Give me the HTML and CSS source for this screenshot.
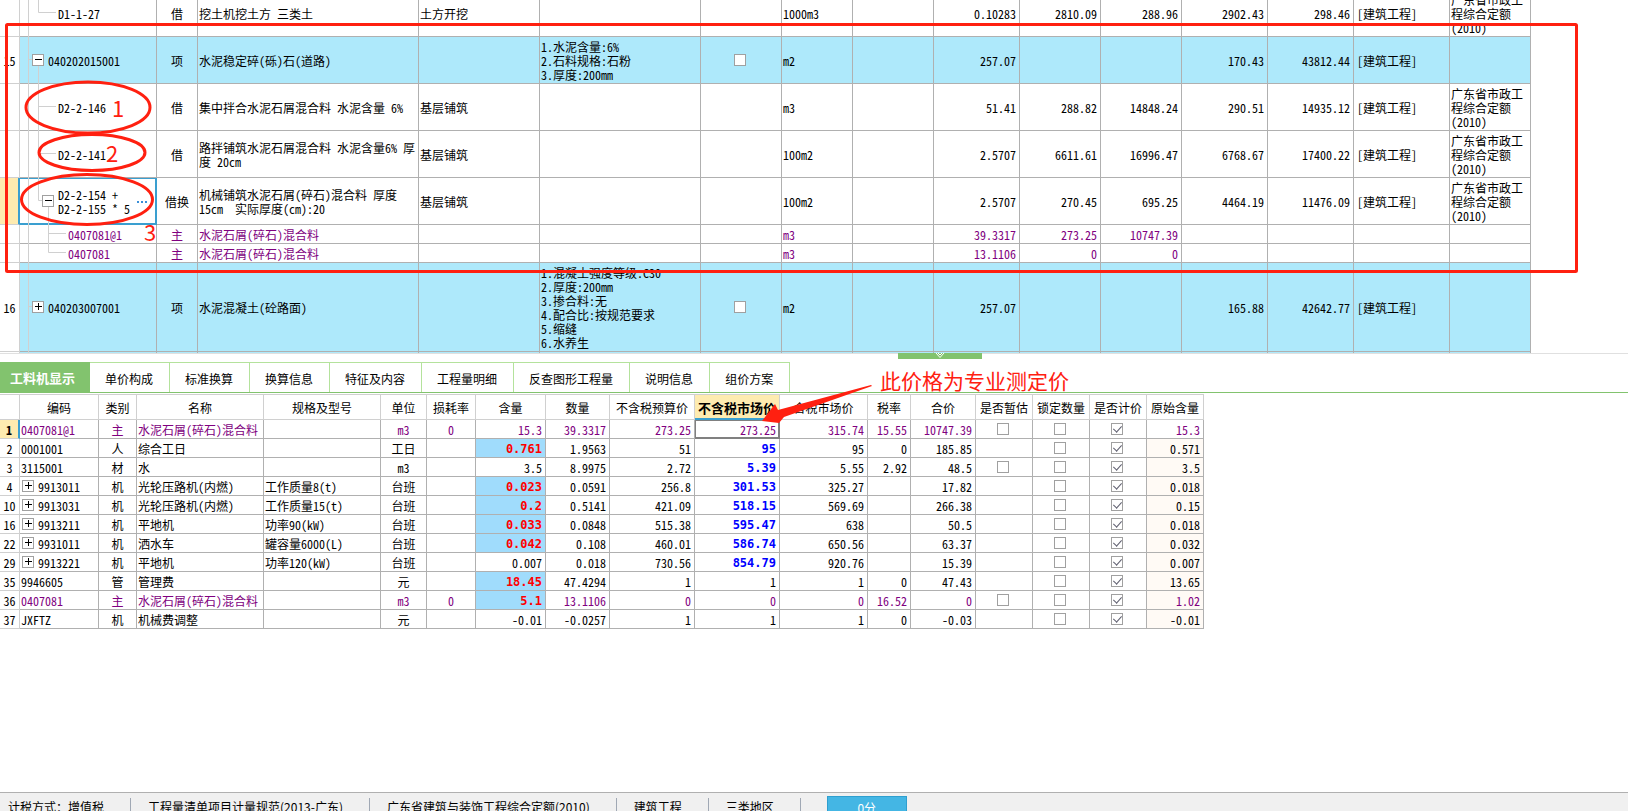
FILE: index.html
```html
<!DOCTYPE html>
<html lang="zh-CN">
<head>
<meta charset="utf-8">
<title>工料机显示</title>
<link rel="stylesheet" href="styles.css">
</head>
<body>
<div class="app">
<section class="budget">
<div class="scrolled">
<table class="grid items">
<colgroup><col class="w20"><col class="w137"><col class="w41"><col class="w221"><col class="w121"><col class="w161"><col class="w81"><col class="w71"><col class="w81"><col class="w86"><col class="w81"><col class="w81"><col class="w86"><col class="w86"><col class="w96"><col class="w81"></colgroup>
<tbody>
<tr class="tall"><th></th><td class="lv2">D1-1-27</td><td class="c">借</td><td>挖土机挖土方 三类土</td><td>土方开挖</td><td></td><td></td><td>1000m3</td><td></td><td class="r">0.10283</td><td class="r">2810.09</td><td class="r">288.96</td><td class="r">2902.43</td><td class="r">298.46</td><td class="major">[建筑工程]</td><td>广东省市政工<br>程综合定额<br>(2010)</td></tr>
<tr class="tall list"><th>15</th><td class="lv1"><div class="node"><button class="toggle minus" aria-label="折叠"></button>040202015001</div></td><td class="c">项</td><td>水泥稳定碎(砾)石(道路)</td><td></td><td>1.水泥含量:6%<br>2.石料规格:石粉<br>3.厚度:200mm</td><td class="k"><input type="checkbox" aria-label="选择 040202015001"></td><td>m2</td><td></td><td class="r">257.07</td><td></td><td></td><td class="r">170.43</td><td class="r">43812.44</td><td class="major">[建筑工程]</td><td></td></tr>
<tr class="tall"><th></th><td class="lv2">D2-2-146</td><td class="c">借</td><td>集中拌合水泥石屑混合料 水泥含量 6%</td><td>基层铺筑</td><td></td><td></td><td>m3</td><td></td><td class="r">51.41</td><td class="r">288.82</td><td class="r">14848.24</td><td class="r">290.51</td><td class="r">14935.12</td><td class="major">[建筑工程]</td><td>广东省市政工<br>程综合定额<br>(2010)</td></tr>
<tr class="tall"><th></th><td class="lv2">D2-2-141</td><td class="c">借</td><td>路拌铺筑水泥石屑混合料 水泥含量6% 厚<br>度 20cm</td><td>基层铺筑</td><td></td><td></td><td>100m2</td><td></td><td class="r">2.5707</td><td class="r">6611.61</td><td class="r">16996.47</td><td class="r">6768.67</td><td class="r">17400.22</td><td class="major">[建筑工程]</td><td>广东省市政工<br>程综合定额<br>(2010)</td></tr>
<tr class="tall"><th class="current"></th><td class="active"><div class="node"><button class="toggle minus" aria-label="折叠"></button><span>D2-2-154 +<br>D2-2-155 * 5</span><button class="more" aria-label="更多"><i></i><i></i><i></i></button></div></td><td class="c">借换</td><td>机械铺筑水泥石屑(碎石)混合料 厚度<br>15cm  实际厚度(cm):20</td><td>基层铺筑</td><td></td><td></td><td>100m2</td><td></td><td class="r">2.5707</td><td class="r">270.45</td><td class="r">695.25</td><td class="r">4464.19</td><td class="r">11476.09</td><td class="major">[建筑工程]</td><td>广东省市政工<br>程综合定额<br>(2010)</td></tr>
<tr class="main"><th></th><td class="lv3">0407081@1</td><td class="c">主</td><td>水泥石屑(碎石)混合料</td><td></td><td></td><td></td><td>m3</td><td></td><td class="r">39.3317</td><td class="r">273.25</td><td class="r">10747.39</td><td></td><td></td><td></td><td></td></tr>
<tr class="main"><th></th><td class="lv3">0407081</td><td class="c">主</td><td>水泥石屑(碎石)混合料</td><td></td><td></td><td></td><td>m3</td><td></td><td class="r">13.1106</td><td class="r">0</td><td class="r">0</td><td></td><td></td><td></td><td></td></tr>
<tr class="taller list"><th>16</th><td class="lv1"><div class="node"><button class="toggle plus" aria-label="展开"></button>040203007001</div></td><td class="c">项</td><td>水泥混凝土(砼路面)</td><td></td><td>1.混凝土强度等级:C30<br>2.厚度:200mm<br>3.掺合料:无<br>4.配合比:按规范要求<br>5.缩缝<br>6.水养生</td><td class="k"><input type="checkbox" aria-label="选择 040203007001"></td><td>m2</td><td></td><td class="r">257.07</td><td></td><td></td><td class="r">165.88</td><td class="r">42642.77</td><td class="major">[建筑工程]</td><td></td></tr>
<tr class="list"><th></th><td></td><td></td><td></td><td></td><td></td><td></td><td></td><td></td><td></td><td></td><td></td><td></td><td></td><td></td><td></td></tr>
</tbody>
</table>
<svg class="tree" width="80" height="363" viewBox="0 -10 80 363" aria-hidden="true">
<path d="M28.5 -10V353M38.5 -10V12.5H56M28.5 59.5H32M38.5 66V200.5H42M38.5 106.5H56M38.5 153.5H56M48.5 207V252.5H66M48.5 233.5H66M28.5 306.5H32"/>
</svg>
</div>
</section>
<div class="splitter"><button class="handle" aria-label="收起"><svg width="10" height="6" viewBox="0 0 10 6"><path d="M1 0L5 4.500L9 0M3 0L5 2L7 0"/></svg></button></div>
<nav class="tabs">
<button class="tab on">工料机显示</button><button class="tab">单价构成</button><button class="tab">标准换算</button><button class="tab">换算信息</button><button class="tab">特征及内容</button><button class="tab">工程量明细</button><button class="tab">反查图形工程量</button><button class="tab">说明信息</button><button class="tab">组价方案</button>
</nav>
<section class="detail">
<table class="grid parts">
<colgroup><col class="w20"><col class="w79"><col class="w38"><col class="w127"><col class="w117"><col class="w46"><col class="w49"><col class="w70"><col class="w64"><col class="w85"><col class="w85"><col class="w88"><col class="w43"><col class="w65"><col class="w57"><col class="w57"><col class="w57"><col class="w57"></colgroup>
<thead>
<tr><th></th><th>编码</th><th>类别</th><th>名称</th><th>规格及型号</th><th>单位</th><th>损耗率</th><th>含量</th><th>数量</th><th>不含税预算价</th><th class="picked">不含税市场价</th><th>含税市场价</th><th>税率</th><th>合价</th><th>是否暂估</th><th>锁定数量</th><th>是否计价</th><th>原始含量</th></tr>
</thead>
<tbody>
<tr class="main"><th class="current edge">1</th><td>0407081@1</td><td class="c">主</td><td>水泥石屑(碎石)混合料</td><td></td><td class="c">m3</td><td class="c">0</td><td class="r">15.3</td><td class="r">39.3317</td><td class="r">273.25</td><td class="r focus">273.25</td><td class="r">315.74</td><td class="r">15.55</td><td class="r">10747.39</td><td class="k"><input type="checkbox" aria-label="是否暂估"></td><td class="k"><input type="checkbox" aria-label="锁定数量"></td><td class="k"><input type="checkbox" aria-label="是否计价" checked></td><td class="r">15.3</td></tr>
<tr><th>2</th><td>0001001</td><td class="c">人</td><td>综合工日</td><td></td><td class="c">工日</td><td></td><td class="r hot">0.761</td><td class="r">1.9563</td><td class="r">51</td><td class="r price">95</td><td class="r">95</td><td class="r">0</td><td class="r">185.85</td><td></td><td class="k"><input type="checkbox" aria-label="锁定数量"></td><td class="k"><input type="checkbox" aria-label="是否计价" checked></td><td class="r orig">0.571</td></tr>
<tr><th>3</th><td>3115001</td><td class="c">材</td><td>水</td><td></td><td class="c">m3</td><td></td><td class="r">3.5</td><td class="r">8.9975</td><td class="r">2.72</td><td class="r price">5.39</td><td class="r">5.55</td><td class="r">2.92</td><td class="r">48.5</td><td class="k"><input type="checkbox" aria-label="是否暂估"></td><td class="k"><input type="checkbox" aria-label="锁定数量"></td><td class="k"><input type="checkbox" aria-label="是否计价" checked></td><td class="r orig">3.5</td></tr>
<tr><th>4</th><td><div class="node"><button class="toggle plus" aria-label="展开"></button>9913011</div></td><td class="c">机</td><td>光轮压路机(内燃)</td><td>工作质量8(t)</td><td class="c">台班</td><td></td><td class="r hot">0.023</td><td class="r">0.0591</td><td class="r">256.8</td><td class="r price">301.53</td><td class="r">325.27</td><td></td><td class="r">17.82</td><td></td><td class="k"><input type="checkbox" aria-label="锁定数量"></td><td class="k"><input type="checkbox" aria-label="是否计价" checked></td><td class="r orig">0.018</td></tr>
<tr><th>10</th><td><div class="node"><button class="toggle plus" aria-label="展开"></button>9913031</div></td><td class="c">机</td><td>光轮压路机(内燃)</td><td>工作质量15(t)</td><td class="c">台班</td><td></td><td class="r hot">0.2</td><td class="r">0.5141</td><td class="r">421.09</td><td class="r price">518.15</td><td class="r">569.69</td><td></td><td class="r">266.38</td><td></td><td class="k"><input type="checkbox" aria-label="锁定数量"></td><td class="k"><input type="checkbox" aria-label="是否计价" checked></td><td class="r orig">0.15</td></tr>
<tr><th>16</th><td><div class="node"><button class="toggle plus" aria-label="展开"></button>9913211</div></td><td class="c">机</td><td>平地机</td><td>功率90(kW)</td><td class="c">台班</td><td></td><td class="r hot">0.033</td><td class="r">0.0848</td><td class="r">515.38</td><td class="r price">595.47</td><td class="r">638</td><td></td><td class="r">50.5</td><td></td><td class="k"><input type="checkbox" aria-label="锁定数量"></td><td class="k"><input type="checkbox" aria-label="是否计价" checked></td><td class="r orig">0.018</td></tr>
<tr><th>22</th><td><div class="node"><button class="toggle plus" aria-label="展开"></button>9931011</div></td><td class="c">机</td><td>洒水车</td><td>罐容量6000(L)</td><td class="c">台班</td><td></td><td class="r hot">0.042</td><td class="r">0.108</td><td class="r">460.01</td><td class="r price">586.74</td><td class="r">650.56</td><td></td><td class="r">63.37</td><td></td><td class="k"><input type="checkbox" aria-label="锁定数量"></td><td class="k"><input type="checkbox" aria-label="是否计价" checked></td><td class="r orig">0.032</td></tr>
<tr><th>29</th><td><div class="node"><button class="toggle plus" aria-label="展开"></button>9913221</div></td><td class="c">机</td><td>平地机</td><td>功率120(kW)</td><td class="c">台班</td><td></td><td class="r">0.007</td><td class="r">0.018</td><td class="r">730.56</td><td class="r price">854.79</td><td class="r">920.76</td><td></td><td class="r">15.39</td><td></td><td class="k"><input type="checkbox" aria-label="锁定数量"></td><td class="k"><input type="checkbox" aria-label="是否计价" checked></td><td class="r orig">0.007</td></tr>
<tr><th>35</th><td>9946605</td><td class="c">管</td><td>管理费</td><td></td><td class="c">元</td><td></td><td class="r hot">18.45</td><td class="r">47.4294</td><td class="r">1</td><td class="r">1</td><td class="r">1</td><td class="r">0</td><td class="r">47.43</td><td></td><td class="k"><input type="checkbox" aria-label="锁定数量"></td><td class="k"><input type="checkbox" aria-label="是否计价" checked></td><td class="r orig">13.65</td></tr>
<tr class="main"><th>36</th><td>0407081</td><td class="c">主</td><td>水泥石屑(碎石)混合料</td><td></td><td class="c">m3</td><td class="c">0</td><td class="r hot">5.1</td><td class="r">13.1106</td><td class="r">0</td><td class="r">0</td><td class="r">0</td><td class="r">16.52</td><td class="r">0</td><td class="k"><input type="checkbox" aria-label="是否暂估"></td><td class="k"><input type="checkbox" aria-label="锁定数量"></td><td class="k"><input type="checkbox" aria-label="是否计价" checked></td><td class="r orig">1.02</td></tr>
<tr><th>37</th><td>JXFTZ</td><td class="c">机</td><td>机械费调整</td><td></td><td class="c">元</td><td></td><td class="r">-0.01</td><td class="r">-0.0257</td><td class="r">1</td><td class="r">1</td><td class="r">1</td><td class="r">0</td><td class="r">-0.03</td><td></td><td class="k"><input type="checkbox" aria-label="锁定数量"></td><td class="k"><input type="checkbox" aria-label="是否计价" checked></td><td class="r orig">-0.01</td></tr>
</tbody>
</table>
</section>
<footer class="status">
<span>计税方式<b>：</b>增值税</span><span>工程量清单项目计量规范(2013-广东)</span><span>广东省建筑与装饰工程综合定额(2010)</span><span>建筑工程</span><span>三类地区</span><button class="score">0分</button>
</footer>
<div class="marks">
<svg width="1628" height="811" viewBox="0 0 1628 811" aria-hidden="true">
<g class="pen"><rect x="6.500" y="24.500" width="1570" height="247" rx="1"/><ellipse cx="88" cy="107.500" rx="62" ry="25.500"/><ellipse cx="92" cy="152.500" rx="53" ry="18"/><ellipse cx="87" cy="199.500" rx="65.500" ry="25"/></g>
<path class="arrow" d="M762 421L775 404L778 410L871 385L872 386L784 417L779 423Z"/>
</svg>
<span class="num n1">1</span><span class="num n2">2</span><span class="num n3">3</span>
<span class="note">此价格为专业测定价</span>
</div>
</div>
</body>
</html>
```
FILE: styles.css
```css
* { box-sizing: border-box; }
body {
  margin: 0;
  overflow: hidden;
  background: #fff;
  color: #000;
  font: 12px/14px "Noto Sans Mono CJK SC", "Noto Sans CJK SC", sans-serif;
}
button { margin: 0; padding: 0; border: 0; font: inherit; color: inherit; }
.app { position: relative; display: flex; flex-direction: column; height: 100vh; }

/* grids */
.grid { table-layout: fixed; border-collapse: separate; border-spacing: 0; width: 0; }
.grid td, .grid th {
  height: 19px;
  padding: 2px 1px 0;
  border: solid #b0b0b0;
  border-width: 0 1px 1px 0;
  text-align: left;
  font-weight: normal;
  white-space: pre;
  overflow: hidden;
}
.grid th { padding: 2px 0 0; border-color: #d0d0d0; text-align: center; }
.grid td.c { text-align: center; }
.grid td.k { padding: 0 2px 0 0; }
.grid td.r { padding-right: 3px; text-align: right; }
.grid .main td { color: #800080; }
.grid .current { background: #feebb0; border-right: 2px solid #3a9fd0; }
.w20 { width: 20px; } .w38 { width: 38px; } .w41 { width: 41px; }
.w43 { width: 43px; } .w46 { width: 46px; } .w49 { width: 49px; }
.w57 { width: 57px; } .w64 { width: 64px; } .w65 { width: 65px; }
.w70 { width: 70px; } .w71 { width: 71px; } .w79 { width: 79px; }
.w81 { width: 81px; } .w85 { width: 85px; } .w86 { width: 86px; }
.w88 { width: 88px; } .w96 { width: 96px; } .w117 { width: 117px; }
.w121 { width: 121px; } .w127 { width: 127px; } .w137 { width: 137px; }
.w161 { width: 161px; } .w221 { width: 221px; }

/* upper list */
.budget { flex: none; height: 353px; overflow: hidden; }
.scrolled { position: relative; margin-top: -10px; }
.items .tall td { height: 47px; }
.items .taller td { height: 89px; }
.items .list td { background: #aee9fb; }
.items td.lv1 { padding-left: 12px; }
.items td.lv2 { padding-left: 38px; }
.items td.lv3 { padding-left: 48px; }
.items td.major { padding-left: 3px; }
.items td.active {
  padding-left: 22px;
  border-color: #3a9fd0;
  box-shadow: inset -1px -1px #3a9fd0, inset 0 1px #3a9fd0;
}
.node { display: flex; align-items: center; gap: 4px; }
.parts .node { padding-left: 1px; }
.tree { position: absolute; left: 0; top: 0; fill: none; stroke: #d0d0d0; }
.toggle {
  position: relative;
  z-index: 1;
  flex: none;
  width: 12px;
  height: 12px;
  margin-bottom: 2px;
  border: 1px solid #a0a0a0;
  background: linear-gradient(#000, #000) 2px 4px / 7px 1px no-repeat, #fff;
}
.toggle.plus::after {
  content: "";
  position: absolute;
  left: 5px;
  top: 1px;
  width: 1px;
  height: 7px;
  background: #000;
}
.more { display: flex; gap: 2px; margin-left: auto; padding-right: 8px; background: none; }
.more i { width: 2px; height: 2px; background: #3a8fd8; }

input[type="checkbox"] {
  appearance: none;
  position: relative;
  display: block;
  width: 12px;
  height: 12px;
  margin: 0 auto;
  border: 1px solid #a0a0a0;
  background: #fff;
}
input[type="checkbox"]:checked::after {
  content: "";
  position: absolute;
  left: 3px;
  top: 0;
  width: 4px;
  height: 7px;
  border: solid #606070;
  border-width: 0 1px 1px 0;
  transform: rotate(42deg);
}

/* splitter */
.splitter { flex: none; height: 9px; border-top: 1px solid #e0e0e0; }
.handle {
  position: relative;
  display: block;
  width: 84px;
  height: 6px;
  margin: -1px 0 0 898px;
  background: #82c36e;
}
.handle svg { display: block; margin: 0 auto; fill: none; stroke: #fff; }

/* tabs */
.tabs { flex: none; display: flex; height: 31px; border-bottom: 1px solid #82c36e; }
.tab {
  height: 30px;
  padding: 2px 16px 0 15px;
  border: solid #b4e29c;
  border-width: 1px 1px 0 0;
  background: #fff;
}
.tab.on {
  padding: 2px 15px 0 10px;
  border: 0;
  background: #82c36e;
  color: #fff;
  font-size: 13px;
  font-weight: bold;
}

/* lower list */
.detail { flex: 1; min-height: 0; padding-top: 1px; overflow: hidden; }
.parts { border-top: 1px solid #d0d0d0; }
.parts thead th { height: 25px; }
.parts thead .picked {
  background: #feebb0;
  border-bottom-color: #3a9fd0;
  box-shadow: inset 0 -1px #3a9fd0;
  font-size: 13px;
  font-weight: bold;
}
.parts .edge { font-weight: bold; }
.parts td.focus { border-color: #808080; box-shadow: inset 1px 1px #808080, inset -1px -1px #808080; }
.parts .hot { background: #a0dcfc; }
.parts td.hot, .parts td.price {
  font-family: "DejaVu Sans Mono", monospace;
  font-weight: bold;
}
.grid.parts td.hot { color: #f00; }
.grid.parts td.price { color: #00f; }
.parts .orig { background: #fffaf5; }

/* status bar */
.status {
  flex: none;
  display: flex;
  height: 19px;
  overflow: hidden;
  padding-left: 8px;
  border-top: 1px solid #b0b0b0;
  background: #f0f0f0;
  font-family: "Noto Sans CJK SC", sans-serif;
}
.status span {
  height: 24px;
  margin-top: 5px;
  padding: 2px 26px 0 0;
  border-right: 1px solid #a0a8b4;
  line-height: 14px;
  white-space: nowrap;
}
.status span + span { padding-left: 17px; }
.status b { font-family: "Noto Sans CJK TC", sans-serif; font-weight: normal; }
.score {
  width: 80px;
  height: 24px;
  margin: 3px 0 0 26px;
  border: 1px solid #2f9fcf;
  background: #44b6e4;
  color: #fff;
}

/* reviewer's marks */
.marks {
  position: absolute;
  inset: 0;
  color: #ff2010;
  font-family: "Noto Sans CJK SC", sans-serif;
  pointer-events: none;
}
.marks svg { display: block; }
.pen { fill: none; stroke: #ff2010; stroke-width: 3; }
.arrow { fill: #ff2010; }
.num { position: absolute; font-size: 22px; line-height: 24px; }
.n1 { left: 112px; top: 95px; }
.n2 { left: 106px; top: 140px; }
.n3 { left: 144px; top: 219px; }
.note { position: absolute; left: 880px; top: 368px; font-size: 21px; line-height: 24px; }
```
